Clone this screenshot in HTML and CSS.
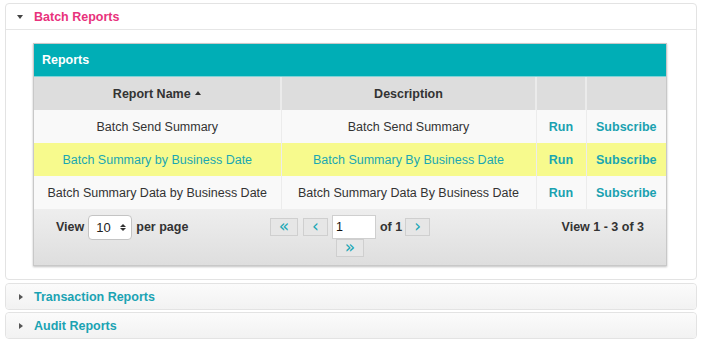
FILE: index.html
```html
<!DOCTYPE html>
<html>
<head>
<meta charset="utf-8">
<link rel="stylesheet" href="styles.css">
</head>
<body>
<div class="wrap">
  <div class="panel open">
    <div class="ph"><span class="tri-down"></span><span class="ptitle pink">Batch Reports</span></div>
    <div class="pbody">
      <div class="grid">
        <div class="caption">Reports</div>
        <table class="tbl">
          <colgroup><col class="c1"><col class="c2"><col class="c3"><col class="c4"></colgroup>
          <thead>
            <tr><th>Report Name <span class="sort"></span></th><th>Description</th><th></th><th></th></tr>
          </thead>
          <tbody>
            <tr><td>Batch Send Summary</td><td>Batch Send Summary</td><td class="act">Run</td><td class="act">Subscribe</td></tr>
            <tr class="hl"><td>Batch Summary by Business Date</td><td>Batch Summary By Business Date</td><td class="act">Run</td><td class="act">Subscribe</td></tr>
            <tr><td>Batch Summary Data by Business Date</td><td>Batch Summary Data By Business Date</td><td class="act">Run</td><td class="act">Subscribe</td></tr>
          </tbody>
        </table>
        <div class="pager">
          <div class="pleft">View <span class="sel"><span>10</span><span class="spin"><span class="su"></span><span class="sd"></span></span></span> per page</div>
          <div class="pcenter">
            <div class="prow">
              <span class="pbtn wide">&laquo;</span>
              <span class="pbtn">&lsaquo;</span>
              <span class="pin">1</span>
              <span class="of">of 1</span>
              <span class="pbtn">&rsaquo;</span>
            </div>
            <div class="prow2"><span class="pbtn wide">&raquo;</span></div>
          </div>
          <div class="pright">View 1 - 3 of 3</div>
        </div>
      </div>
    </div>
  </div>
  <div class="panel closed">
    <div class="ph"><span class="tri-right"></span><span class="ptitle teal">Transaction Reports</span></div>
  </div>
  <div class="panel closed">
    <div class="ph"><span class="tri-right"></span><span class="ptitle teal">Audit Reports</span></div>
  </div>
</div>
</body>
</html>
```
FILE: styles.css
```css
* { box-sizing: border-box; }
html, body { margin: 0; padding: 0; background: #fff; }
body { font-family: "Liberation Sans", Arial, sans-serif; font-size: 12.5px; color: #333; }
.wrap { padding: 3px 4px 0 5px; display: flex; flex-direction: column; gap: 3px; }
.panel { border: 1px solid #e3e3e3; border-radius: 4px; background: #fff; }
.ph { height: 25px; display: flex; align-items: center; padding-left: 11px; }
.panel.open .ph { border-bottom: 1px solid #e6e6e6; height: 26px; }
.panel.closed + .panel.closed { margin-top: -1px; }
.panel.closed .ph { background: linear-gradient(#fbfbfb, #f2f2f2); border-radius: 4px; }
.ptitle { font-weight: bold; margin-left: 11px; }
.pink { color: #e8327c; }
.teal { color: #1ba3b3; }
.tri-down { width: 0; height: 0; border-left: 3px solid transparent; border-right: 3px solid transparent; border-top: 4px solid #444; margin-top: 1px; }
.tri-right { width: 0; height: 0; border-top: 3px solid transparent; border-bottom: 3px solid transparent; border-left: 4px solid #555; margin-left: 2px; }
.pbody { padding: 13px 29px 13px 27px; }
.grid { border: 1px solid #c8c8c8; box-shadow: 0 1px 2px rgba(0,0,0,0.25); background: #f9f9f9; }
.caption { background: #00aeb6; color: #fff; font-weight: bold; height: 33px; line-height: 32px; padding-left: 8px; border-bottom: 1px solid #7fd3d7; }
.tbl { width: 100%; border-collapse: collapse; table-layout: fixed; }
.c1 { width: 247px; } .c2 { width: 255px; } .c3 { width: 50px; } .c4 { width: 80px; }
.tbl th { background: #dddddd; height: 33px; font-weight: bold; color: #333; border-right: 2px solid #ebebeb; text-align: center; padding: 0; }
.tbl th:last-child, .tbl td:last-child { border-right: 0; }
.tbl td { height: 33px; text-align: center; padding: 0; border-right: 1px solid #ececec; background: #f9f9f9; }
.tbl tr.hl td { background: #f7fa8d; color: #1aa7b2; }
.tbl td.act { font-weight: bold; color: #1aa1b0; }
.sort { display: inline-block; width: 0; height: 0; border-left: 3px solid transparent; border-right: 3px solid transparent; border-bottom: 4px solid #333; vertical-align: 3px; margin-left: 1px; }
.pager { height: 56px; background: linear-gradient(#eeeeee, #dedede); display: flex; padding-top: 5px; }
.pleft { width: 216px; padding-left: 22px; font-weight: bold; display: flex; height: 26px; align-items: center; }
.sel { display: inline-flex; align-items: center; justify-content: space-between; width: 44px; height: 25px; border: 1px solid #c4c4c4; border-radius: 4px; background: #fff; margin: 0 4px; padding: 0 5px 0 7px; font-weight: normal; color: #222; font-size: 13px; }
.spin { display: flex; flex-direction: column; gap: 1px; }
.su { width: 0; height: 0; border-left: 3px solid transparent; border-right: 3px solid transparent; border-bottom: 3px solid #333; }
.sd { width: 0; height: 0; border-left: 3px solid transparent; border-right: 3px solid transparent; border-top: 3px solid #333; }
.pcenter { width: 200px; display: flex; flex-direction: column; align-items: center; }
.prow { display: flex; align-items: center; height: 25px; }
.prow2 { display: flex; justify-content: center; }
.pbtn { display: inline-block; width: 25px; height: 18px; line-height: 15px; text-align: center; border: 1px solid #cfcfcf; background: #e6e6e6; color: #1aa7b5; font-size: 17px; font-family: "DejaVu Sans", sans-serif; }
.pbtn.wide { width: 28px; }
.prow .pbtn.wide { margin-right: 5px; }
.pin { display: inline-block; width: 44px; height: 24px; line-height: 22px; background: #fff; border: 1px solid #cfcfcf; padding-left: 3px; color: #111; margin: 0 4px; }
.of { font-weight: bold; margin-right: 3px; }
.pright { flex: 1; text-align: right; padding-right: 22px; font-weight: bold; padding-top: 6px; }
```
